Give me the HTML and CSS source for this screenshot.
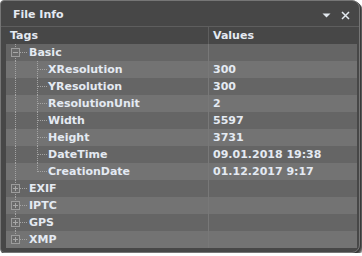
FILE: index.html
```html
<!DOCTYPE html>
<html>
<head>
<meta charset="utf-8">
<link rel="stylesheet" href="styles.css">
</head>
<body>
<div class="window">
  <div class="titlebar">
    <span class="title">File Info</span>
    <div class="tools">
      <svg class="ico" width="9" height="9" viewBox="0 0 9 9"><polygon points="0.5,2.5 8.5,2.5 4.5,6.5" fill="#e2e8ee"/></svg>
      <svg class="ico" width="9" height="9" viewBox="0 0 9 9"><path d="M1 1 L8 8 M8 1 L1 8" stroke="#e2e8ee" stroke-width="1.5" fill="none"/></svg>
    </div>
  </div>
  <div class="table">
    <div class="row head">
      <div class="tag hcell">Tags</div>
      <div class="val hcell">Values</div>
    </div>

    <div class="row dark">
      <div class="tag"><svg class="tree" width="23" height="17" viewBox="0 0 23 17"><path class="dot" d="M9.5 0 V17 M14 8.5 H22"/><rect class="box" x="5.5" y="4.5" width="8" height="8"/><path class="sign" d="M7 8.5 H12"/></svg>Basic</div>
      <div class="val"></div>
    </div>
    <div class="row light">
      <div class="tag"><svg class="tree" width="42" height="17" viewBox="0 0 42 17"><path class="dot" d="M9.5 0 V17 M31.5 0 V17 M32 8.5 H41"/></svg>XResolution</div>
      <div class="val">300</div>
    </div>
    <div class="row dark">
      <div class="tag"><svg class="tree" width="42" height="17" viewBox="0 0 42 17"><path class="dot" d="M9.5 0 V17 M31.5 0 V17 M32 8.5 H41"/></svg>YResolution</div>
      <div class="val">300</div>
    </div>
    <div class="row light">
      <div class="tag"><svg class="tree" width="42" height="17" viewBox="0 0 42 17"><path class="dot" d="M9.5 0 V17 M31.5 0 V17 M32 8.5 H41"/></svg>ResolutionUnit</div>
      <div class="val">2</div>
    </div>
    <div class="row dark">
      <div class="tag"><svg class="tree" width="42" height="17" viewBox="0 0 42 17"><path class="dot" d="M9.5 0 V17 M31.5 0 V17 M32 8.5 H41"/></svg>Width</div>
      <div class="val">5597</div>
    </div>
    <div class="row light">
      <div class="tag"><svg class="tree" width="42" height="17" viewBox="0 0 42 17"><path class="dot" d="M9.5 0 V17 M31.5 0 V17 M32 8.5 H41"/></svg>Height</div>
      <div class="val">3731</div>
    </div>
    <div class="row dark">
      <div class="tag"><svg class="tree" width="42" height="17" viewBox="0 0 42 17"><path class="dot" d="M9.5 0 V17 M31.5 0 V17 M32 8.5 H41"/></svg>DateTime</div>
      <div class="val">09.01.2018 19:38</div>
    </div>
    <div class="row light">
      <div class="tag"><svg class="tree" width="42" height="17" viewBox="0 0 42 17"><path class="dot" d="M9.5 0 V17 M31.5 0 V9 M32 8.5 H41"/></svg>CreationDate</div>
      <div class="val">01.12.2017 9:17</div>
    </div>

    <div class="row dark">
      <div class="tag"><svg class="tree" width="23" height="17" viewBox="0 0 23 17"><path class="dot" d="M9.5 0 V17 M14 8.5 H22"/><rect class="box" x="5.5" y="4.5" width="8" height="8"/><path class="sign" d="M7 8.5 H12 M9.5 6 V11"/></svg>EXIF</div>
      <div class="val"></div>
    </div>
    <div class="row light">
      <div class="tag"><svg class="tree" width="23" height="17" viewBox="0 0 23 17"><path class="dot" d="M9.5 0 V17 M14 8.5 H22"/><rect class="box" x="5.5" y="4.5" width="8" height="8"/><path class="sign" d="M7 8.5 H12 M9.5 6 V11"/></svg>IPTC</div>
      <div class="val"></div>
    </div>
    <div class="row dark">
      <div class="tag"><svg class="tree" width="23" height="17" viewBox="0 0 23 17"><path class="dot" d="M9.5 0 V17 M14 8.5 H22"/><rect class="box" x="5.5" y="4.5" width="8" height="8"/><path class="sign" d="M7 8.5 H12 M9.5 6 V11"/></svg>GPS</div>
      <div class="val"></div>
    </div>
    <div class="row light">
      <div class="tag"><svg class="tree" width="23" height="17" viewBox="0 0 23 17"><path class="dot" d="M9.5 0 V5 M14 8.5 H22"/><rect class="box" x="5.5" y="4.5" width="8" height="8"/><path class="sign" d="M7 8.5 H12 M9.5 6 V11"/></svg>XMP</div>
      <div class="val"></div>
    </div>
  </div>
</div>
</body>
</html>
```

FILE: styles.css
```css
html, body {
  margin: 0;
  padding: 0;
  background: #ffffff;
}
body {
  font-family: "DejaVu Sans", sans-serif;
  font-weight: bold;
  font-size: 11px;
  color: #e4eaf2;
}
.window {
  width: 358px;
  height: 251px;
  background: #474747;
  border: 1px solid #767676;
  border-radius: 4px 8px 8px 4px;
  box-shadow: 1px 1px 0 #3a3a3a, 2px 2px 0 #5a5a5a, 3px 3px 1px #8a8a8a;
  display: flex;
  flex-direction: column;
  overflow: hidden;
}
.titlebar {
  height: 22px;
  padding-top: 3px;
  line-height: 22px;
  display: flex;
  align-items: flex-start;
  padding-left: 12px;
  padding-right: 9px;
  border-bottom: 1px solid #5e5e5e;
}
.title {
  flex: 1;
}
.tools {
  display: flex;
  gap: 10px;
  padding-top: 7px;
}
.ico {
  display: block;
}
.table {
  margin: 0 2px 0 5px;
  display: flex;
  flex-direction: column;
}
.row {
  display: flex;
  height: 17px;
  line-height: 17px;
}
.tag {
  width: 202px;
  border-right: 1px solid #787878;
  display: flex;
  align-items: center;
  white-space: nowrap;
}
.val {
  flex: 1;
  padding-left: 4px;
  white-space: nowrap;
}
.head .tag {
  padding-left: 4px;
  width: 198px;
  border-right-color: #5e5e5e;
}
.head .val {
  padding-left: 4px;
}
.dark { background: #656565; }
.light { background: #737373; }
.tree {
  display: block;
  flex: none;
}
.dot {
  stroke: #a4a4a4;
  stroke-width: 1;
  stroke-dasharray: 1 1;
  fill: none;
}
.box {
  fill: #6a6a6a;
  stroke: #9c9c9c;
  stroke-width: 1;
}
.sign {
  stroke: #a8a8a8;
  stroke-width: 1;
  fill: none;
}
```
